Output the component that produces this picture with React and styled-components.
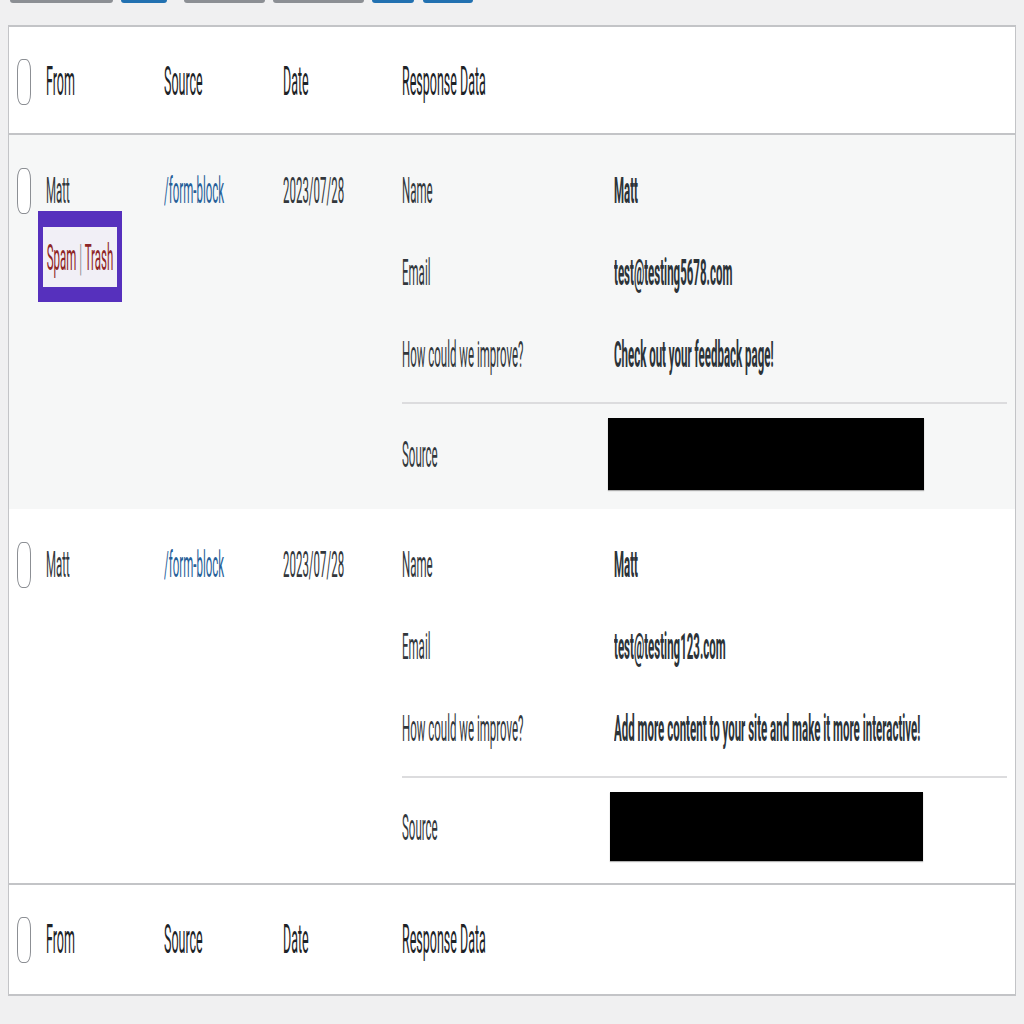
import styled, { createGlobalStyle, css } from "styled-components";

const GlobalStyle = createGlobalStyle`
body {
    margin: 0 8px;
    background: #f0f0f1;
    font-family: Roboto, "Liberation Sans", sans-serif;
}
`

const stretched = css`
display: inline-block;
transform: scaleY(3.2);
transform-origin: center;
white-space: nowrap;
line-height: 14px;
`

const entries = [
    {
        from: 'Matt', source: '/form-block', date: '2023/07/28', alt: true, actions: true,
        fields: [['Name', 'Matt'], ['Email', 'test@testing5678.com'], ['How could we improve?', 'Check out your feedback page!']],
        boxWidth: 316, boxHeight: 72, boxShift: -6,
    },
    {
        from: 'Matt', source: '/form-block', date: '2023/07/28', alt: false, actions: false,
        fields: [['Name', 'Matt'], ['Email', 'test@testing123.com'], ['How could we improve?', 'Add more content to your site and make it more interactive!']],
        boxWidth: 313, boxHeight: 69, boxShift: -4,
    },
]

const buttons = [
    { w: 103, ml: 2, primary: false },
    { w: 46, ml: 8, primary: true },
    { w: 81, ml: 17, primary: false },
    { w: 91, ml: 8, primary: false },
    { w: 42, ml: 8, primary: true },
    { w: 50, ml: 9, primary: true },
]

function HeaderRow({ footer }) {
    return (
        <HeadRow $footer={footer}>
            <CheckCell><Checkbox /></CheckCell>
            <HeadCell><HeadText>From</HeadText></HeadCell>
            <HeadCell><HeadText>Source</HeadText></HeadCell>
            <HeadCell><HeadText>Date</HeadText></HeadCell>
            <HeadCell><HeadText>Response Data</HeadText></HeadCell>
        </HeadRow>
    )
}

export default function App() {
    return (
        <>
            <GlobalStyle />
            <Toolbar>
                {buttons.map((b, i) => <ToolButton key={i} $w={b.w} $ml={b.ml} $primary={b.primary} />)}
            </Toolbar>
            <Table>
                <HeaderRow />
                {entries.map((e, i) => (
                    <EntryRow key={i} $alt={e.alt}>
                        <CheckCell $top><Checkbox /></CheckCell>
                        <Cell>
                            <Line><PlainText>{e.from}</PlainText></Line>
                            {e.actions && (
                                <ActionsHighlight>
                                    <ActionsInner>
                                        <ActionText>Spam <Sep>|</Sep> Trash</ActionText>
                                    </ActionsInner>
                                </ActionsHighlight>
                            )}
                        </Cell>
                        <Cell>
                            <Line><LinkText href="#">{e.source}</LinkText></Line>
                        </Cell>
                        <Cell>
                            <Line><PlainText>{e.date}</PlainText></Line>
                        </Cell>
                        <Response>
                            {e.fields.map(([label, value]) => (
                                <FieldRow key={label}>
                                    <FieldLabel>{label}</FieldLabel>
                                    <FieldValue>{value}</FieldValue>
                                </FieldRow>
                            ))}
                            <Divider />
                            <SourceRow>
                                <FieldLabel>Source</FieldLabel>
                                <Redacted style={{ width: e.boxWidth, height: e.boxHeight, marginLeft: e.boxShift }} />
                            </SourceRow>
                        </Response>
                    </EntryRow>
                ))}
                <HeaderRow footer />
            </Table>
        </>
    )
}

const Toolbar = styled.div`
height: 3px;
overflow: hidden;
display: flex;
align-items: flex-end;
margin-bottom: 22px;
`
const ToolButton = styled.div`
flex: none;
width: ${p => p.$w}px;
height: 30px;
margin-left: ${p => p.$ml}px;
border-radius: 3px;
background: ${p => p.$primary ? '#2271b1' : '#8c8f94'};
`
const Table = styled.div`
background: #fff;
border: 1px solid #c3c4c7;
border-top: 2px solid #c3c4c7;
border-bottom: none;
box-shadow: 0 1px 1px rgba(0, 0, 0, 0.04);
`
const gridCols = css`
display: grid;
grid-template-columns: 37px 118px 119px 119px 1fr;
`
const HeadRow = styled.div`
${gridCols}
align-items: center;
height: ${p => p.$footer ? 113 : 108}px;
padding-top: ${p => p.$footer ? 0 : 3}px;
box-sizing: border-box;
background: #fff;
border-top: ${p => p.$footer ? '2px solid #c3c4c7' : 'none'};
border-bottom: 2px solid #c3c4c7;
`
const HeadCell = styled.div`
display: flex;
align-items: center;
`
const HeadText = styled.span`
${stretched}
font-size: 12.5px;
color: #1d2327;
`
const CheckCell = styled.div`
padding-left: 8px;
padding-top: ${p => p.$top ? 19 : 0}px;
`
const Checkbox = styled.div`
width: 14px;
height: 46px;
box-sizing: border-box;
border: 1.5px solid #8c8f94;
border-radius: 5px / 11px;
background: #fff;
`
const EntryRow = styled.div`
${gridCols}
align-items: start;
box-sizing: border-box;
min-height: 374px;
background: ${p => p.$alt ? '#f6f7f7' : '#fff'};
padding-top: 14px;
`
const Cell = styled.div`
display: flex;
flex-direction: column;
align-items: flex-start;
padding-top: 28px;
`
const Line = styled.div`
height: 26px;
display: flex;
align-items: center;
`
const PlainText = styled.span`
${stretched}
font-size: 11.5px;
color: #32373c;
`
const LinkText = styled.a`
${stretched}
font-size: 11.5px;
color: #275f99;
text-decoration: none;
`
const ActionsHighlight = styled.div`
margin: 8px 0 0 -8px;
padding: 16px 5px 15px;
background: #5630bd;
`
const ActionsInner = styled.div`
width: 74px;
height: 60px;
background: #f1eff6;
display: flex;
align-items: center;
justify-content: center;
`
const ActionText = styled.span`
${stretched}
font-size: 11.5px;
color: #8e2626;
`
const Sep = styled.span`
color: #8c8f94;
`
const Response = styled.div`
display: flex;
flex-direction: column;
padding-right: 8px;
`
const FieldRow = styled.div`
display: grid;
grid-template-columns: 212px 1fr;
align-items: center;
height: 82px;
`
const FieldLabel = styled.span`
${stretched}
justify-self: start;
font-size: 11.5px;
color: #32373c;
`
const FieldValue = styled.span`
${stretched}
justify-self: start;
font-size: 11.5px;
font-weight: 700;
color: #2c3338;
`
const Divider = styled.div`
height: 2px;
margin-top: 7px;
background: #dcdcde;
`
const SourceRow = styled.div`
display: grid;
grid-template-columns: 212px 1fr;
align-items: center;
padding: 14px 0 18px;
`
const Redacted = styled.div`
background: #000;
box-shadow: 0 1px 1px rgba(0, 0, 0, 0.3);
`
